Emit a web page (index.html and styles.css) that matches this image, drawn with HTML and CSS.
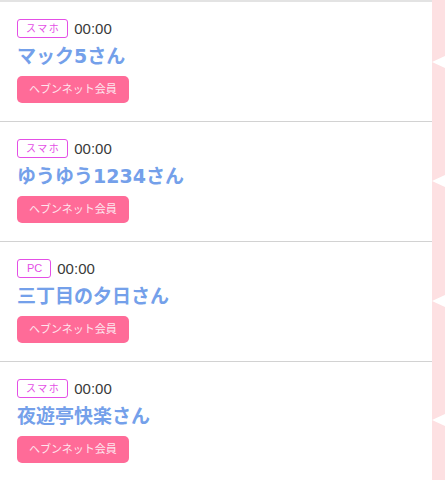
FILE: index.html
```html
<!DOCTYPE html>
<html lang="ja">
<head>
    <meta charset="UTF-8">
    <meta name="viewport" content="width=device-width, initial-scale=1.0">
    <title>アクセス履歴</title>
    <link rel="stylesheet" href="styles.css">
</head>
<body>
    <div class="page">
        <ul class="visitors">
            <li class="visitor">
                <div class="meta"><span class="device">スマホ</span><span class="time">00:00</span></div>
                <div class="name">マック5さん</div>
                <span class="badge">ヘブンネット会員</span>
            </li>
            <li class="visitor">
                <div class="meta"><span class="device">スマホ</span><span class="time">00:00</span></div>
                <div class="name">ゆうゆう1234さん</div>
                <span class="badge">ヘブンネット会員</span>
            </li>
            <li class="visitor">
                <div class="meta"><span class="device device-pc">PC</span><span class="time">00:00</span></div>
                <div class="name">三丁目の夕日さん</div>
                <span class="badge">ヘブンネット会員</span>
            </li>
            <li class="visitor">
                <div class="meta"><span class="device">スマホ</span><span class="time">00:00</span></div>
                <div class="name">夜遊亭快楽さん</div>
                <span class="badge">ヘブンネット会員</span>
            </li>
        </ul>
        <div class="side">
            <div class="notch"><span class="arrow"></span></div>
            <div class="notch"><span class="arrow"></span></div>
            <div class="notch"><span class="arrow"></span></div>
            <div class="notch"><span class="arrow"></span></div>
        </div>
    </div>
</body>
</html>
```

FILE: styles.css
```css
body {
    margin: 0;
    padding: 0;
    background-color: #fff;
    font-family: "Liberation Sans", "Noto Sans CJK JP", sans-serif;
    overflow: hidden;
}

.page {
    display: flex;
    height: 480px;
}

.visitors {
    flex: 1;
    margin: 0;
    padding: 0;
    list-style: none;
    border-top: 2px solid #e3e3e3;
}

.visitor {
    box-sizing: border-box;
    height: 120px;
    padding: 16px 17px 0;
    border-bottom: 1px solid #d2d2d2;
}

.meta {
    display: flex;
    align-items: center;
    gap: 6px;
    height: 20px;
}

.device {
    box-sizing: border-box;
    height: 19px;
    padding: 0 7px 0 8px;
    border: 1px solid #e44fe6;
    border-radius: 3px;
    color: #e44fe6;
    font-size: 10px;
    letter-spacing: 1.5px;
    line-height: 17px;
}

.device-pc {
    padding: 0 8px 0 9px;
    font-size: 11px;
    letter-spacing: 0;
}

.time {
    color: #3a3a3a;
    font-size: 15px;
}

.name {
    margin: 5px 0 6px;
    color: #74a0ea;
    font-family: "DejaVu Sans", "Noto Sans CJK JP", sans-serif;
    font-size: 19px;
    font-weight: bold;
    line-height: 27px;
}

.badge {
    display: inline-block;
    padding: 0 12px;
    background-color: #ff6b98;
    border-radius: 5px;
    color: #fde6ee;
    font-size: 11px;
    line-height: 27px;
}

.side {
    width: 13px;
    padding-top: 2px;
    background-color: #fde0e2;
    display: flex;
    flex-direction: column;
}

.notch {
    height: 120px;
    display: flex;
    align-items: center;
}

.arrow {
    width: 0;
    height: 0;
    border-top: 6px solid transparent;
    border-bottom: 6px solid transparent;
    border-right: 13px solid #fff;
}
```
